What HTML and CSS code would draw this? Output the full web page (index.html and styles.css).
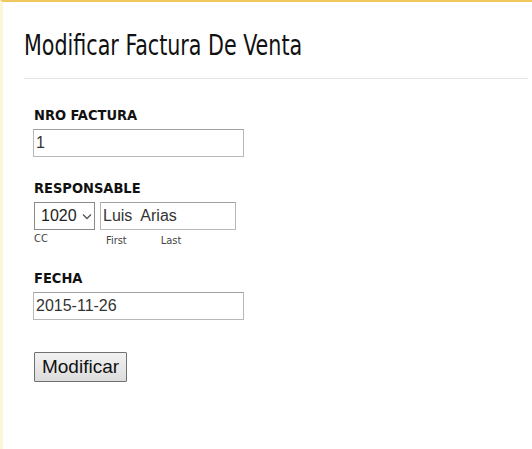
FILE: index.html
```html
<!DOCTYPE html>
<html>
<head>
<meta charset="utf-8">
<link rel="stylesheet" href="styles.css">
</head>
<body>
<div class="frame">
  <h1 class="title"><span class="title-text">Modificar Factura De Venta</span></h1>
  <form class="form">
    <div class="field">
      <label class="label">NRO FACTURA</label>
      <input class="text wide" type="text" value="1">
    </div>
    <div class="field">
      <label class="label">RESPONSABLE</label>
      <div class="row">
        <div class="sub">
          <div class="select">1020 <svg width="10" height="7" viewBox="0 0 10 7"><path d="M1 1.5 L5 5.5 L9 1.5" fill="none" stroke="#555" stroke-width="1.3"/></svg></div>
          <span class="hint">CC</span>
        </div>
        <div class="sub">
          <input class="text name" type="text" value="Luis  Arias">
          <div class="hints"><span class="hint">First</span><span class="hint">Last</span></div>
        </div>
      </div>
    </div>
    <div class="field">
      <label class="label">FECHA</label>
      <input class="text wide" type="text" value="2015-11-26">
    </div>
    <button class="btn" type="button">Modificar</button>
  </form>
</div>
</body>
</html>
```
FILE: styles.css
```css
html, body {
  margin: 0;
  padding: 0;
  background: #fff;
}
.frame {
  width: 532px;
  height: 449px;
  box-sizing: border-box;
  border-top: 2px solid #f1c75f;
  border-left: 3px solid #fcf6d6;
  padding: 0 4px 0 21px;
}
.title {
  margin: 0;
  padding: 28px 0 16px 0;
  font-family: "DejaVu Sans Condensed", "DejaVu Sans", sans-serif;
  font-weight: normal;
  font-size: 28px;
  color: #111;
  border-bottom: 1px solid #e4e4e4;
  line-height: 32px;
}
.title-text {
  display: inline-block;
  transform: scaleX(0.82);
  transform-origin: left center;
  white-space: nowrap;
}
.form {
  padding: 28px 0 0 10px;
}
.field {
  margin-bottom: 23px;
}
.label {
  display: block;
  font-family: "DejaVu Sans Condensed", "DejaVu Sans", sans-serif;
  font-weight: bold;
  font-size: 14.5px;
  color: #111;
  line-height: 16px;
  margin-bottom: 6px;
}
.text {
  box-sizing: border-box;
  height: 28px;
  border: 1px solid #b8b8b8;
  border-top-color: #a0a0a0;
  font-family: "Liberation Sans", Arial, sans-serif;
  font-size: 16px;
  color: #333;
  padding: 2px 2px;
  margin: 0 0 0 -1px;
  display: block;
  outline: none;
}
.wide {
  width: 211px;
}
.row {
  display: flex;
  gap: 5px;
}
.sub {
  display: flex;
  flex-direction: column;
}
.select {
  box-sizing: border-box;
  width: 61px;
  height: 28px;
  border: 1px solid #8a8a8a;
  font-family: "Liberation Sans", Arial, sans-serif;
  font-size: 16px;
  color: #222;
  display: flex;
  align-items: center;
  padding-left: 6px;
  gap: 5px;
}
.name {
  width: 136px;
  margin: 0;
}
.hint {
  font-family: "DejaVu Sans Condensed", "DejaVu Sans", sans-serif;
  font-size: 11px;
  color: #444;
  line-height: 12px;
  margin-top: 3px;
}
.hints {
  display: flex;
  gap: 34px;
  padding-left: 6px;
  margin-top: 2px;
}
.btn {
  margin-top: 9px;
  width: 93px;
  height: 30px;
  font-family: "Liberation Sans", Arial, sans-serif;
  font-size: 19px;
  color: #111;
  background: linear-gradient(#f2f2f2, #dcdcdc);
  border: 1px solid #707070;
  border-radius: 1px;
  padding: 0;
}
```
